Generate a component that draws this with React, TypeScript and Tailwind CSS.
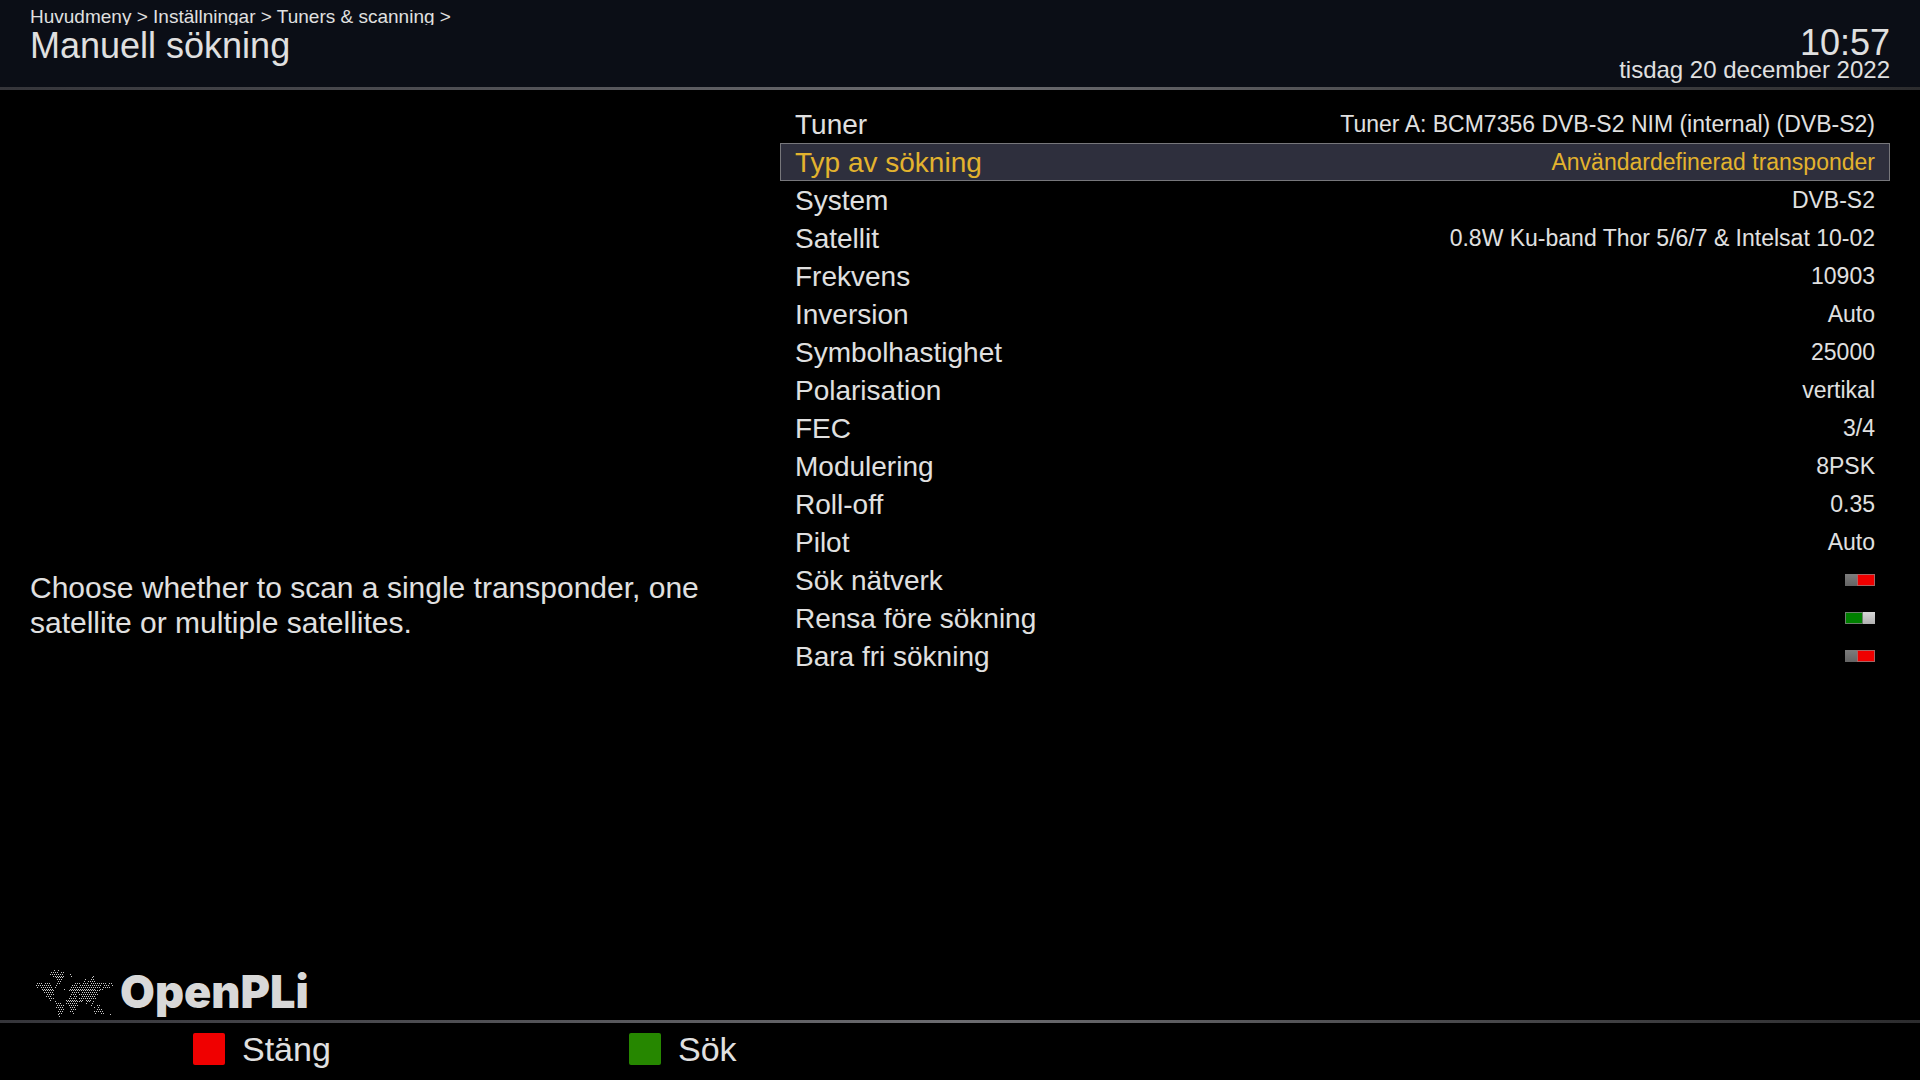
import clsx from 'clsx';

interface Setting {
  label: string;
  value: string | boolean;
}

const settings: Setting[] = [
  { label: 'Tuner', value: 'Tuner A: BCM7356 DVB-S2 NIM (internal) (DVB-S2)' },
  { label: 'Typ av sökning', value: 'Användardefinerad transponder' },
  { label: 'System', value: 'DVB-S2' },
  { label: 'Satellit', value: '0.8W Ku-band Thor 5/6/7 & Intelsat 10-02' },
  { label: 'Frekvens', value: '10903' },
  { label: 'Inversion', value: 'Auto' },
  { label: 'Symbolhastighet', value: '25000' },
  { label: 'Polarisation', value: 'vertikal' },
  { label: 'FEC', value: '3/4' },
  { label: 'Modulering', value: '8PSK' },
  { label: 'Roll-off', value: '0.35' },
  { label: 'Pilot', value: 'Auto' },
  { label: 'Sök nätverk', value: false },
  { label: 'Rensa före sökning', value: true },
  { label: 'Bara fri sökning', value: false },
];

const breadcrumbs = ['Huvudmeny', 'Inställningar', 'Tuners & scanning'];

// Dotted world map: each # is one dot, odd rows are shifted by half a step
const worldMap = [
  '.........#.#...........................',
  '.......####.##.........................',
  '.......#######...#.....................',
  '........######...#..........#..........',
  '..........####..............#..........',
  '..........###...........#..##..........',
  '...........##...........#.####.........',
  '###.###...##.......###.###.########.##.',
  '########..#.......###.###########.###.#',
  '#.######.#.......###############.####..',
  '...######.....#..#############..##.....',
  '...######.......################.......',
  '....#####.........####.########........',
  '.....####........###.##########........',
  '.....###.........#.##..#######.........',
  '......###.......####.#########.........',
  '.......#.......######.##.###...........',
  '.........#.....########..##.#..........',
  '..........###..######....#..#..........',
  '..........####..#####......#..##.......',
  '..........####...###.........#.#.......',
  '...........###...###..........###......',
  '...........###...##..........#####.....',
  '...........##.....#..........#..##.....',
  '...........#.........................#.',
  '...........#...........................',
];

function WorldMap() {
  return (
    <svg viewBox="0 0 78 48" className="h-12 w-[78px]" fill="#c8c8c8" aria-hidden="true">
      {worldMap.map((row, y) =>
        row.split('').map((dot, x) =>
          dot === '#' ? (
            <rect
              key={`${x}-${y}`}
              x={x * 2 + (y % 2)}
              y={Math.round(y * 1.85)}
              width="1"
              height="1"
              shapeRendering="crispEdges"
            />
          ) : null,
        ),
      )}
    </svg>
  );
}

function Toggle({ label, on }: { label: string; on: boolean }) {
  return (
    <button
      type="button"
      role="switch"
      aria-checked={on}
      aria-label={label}
      className={clsx('flex h-3 w-[30px]', on ? 'justify-start' : 'justify-end')}
    >
      {!on && <span className="h-full flex-1 bg-linear-to-b from-[#7c7c7c] to-[#646464]" />}
      <span className={clsx('h-full w-[18px] border', on ? 'border-[#6c806c] bg-[#008000]' : 'border-[#a86464] bg-[#f00000]')} />
      {on && <span className="h-full flex-1 bg-linear-to-b from-[#d8d8d8] to-[#b0b0b0]" />}
    </button>
  );
}

function SettingRow({ setting, selected }: { setting: Setting; selected: boolean }) {
  return (
    <li
      className={clsx(
        'flex h-[38px] items-center justify-between border px-[14px]',
        selected ? 'border-[#77777b] bg-[#2e2f3d] text-[#e3b32e]' : 'border-transparent',
      )}
    >
      <span className="pt-[2px] text-[28px] leading-[34px]">{setting.label}</span>
      {typeof setting.value === 'boolean' ? (
        <Toggle label={setting.label} on={setting.value} />
      ) : (
        <span className="text-[23px] leading-9">{setting.value}</span>
      )}
    </li>
  );
}

function Divider() {
  return <div className="h-[3px] bg-linear-to-r from-[#35353a] via-[#6c6c70] to-[#2c2c2e]" />;
}

export default function App() {
  return (
    <div className="flex min-h-screen flex-col bg-black font-['Liberation_Sans',Arial,sans-serif] text-[#e0e0e0]">
      <header className="flex h-[87px] justify-between bg-[#0b0e16] px-[30px]">
        <div>
          <nav className="mt-1 h-[21px] overflow-hidden text-[19px] leading-[25px]">
            {breadcrumbs.map((crumb) => (
              <span key={crumb}>
                <a href="#">{crumb}</a>
                {' > '}
              </span>
            ))}
          </nav>
          <h1 className="text-[36px] leading-[42px]">Manuell sökning</h1>
        </div>
        <div className="pt-[25px] text-right">
          <p className="text-[36px] leading-9">10:57</p>
          <p className="text-[24px] leading-[18px]">tisdag 20 december 2022</p>
        </div>
      </header>
      <Divider />

      <main className="flex flex-1 pr-[30px]">
        <section className="flex w-[780px] shrink-0 flex-col justify-between pl-[30px]">
          <p className="mt-[480px] max-w-[710px] text-[30px] leading-[35px]">
            Choose whether to scan a single transponder, one satellite or multiple satellites.
          </p>
          <div className="flex items-end gap-[6px] pb-[2px] pl-[6px]">
            <WorldMap />
            <span className="font-['Inter',sans-serif] text-[45px] leading-[52px] font-black text-[#d8d8d8]">OpenPLi</span>
          </div>
        </section>
        <ul className="flex-1 pt-[15px]">
          {settings.map((setting) => (
            <SettingRow key={setting.label} setting={setting} selected={setting.label === 'Typ av sökning'} />
          ))}
        </ul>
      </main>

      <Divider />
      <footer className="flex h-[57px] items-center pb-[6px] pl-[193px] text-[34px] leading-10">
        <button type="button" className="flex w-[436px] items-center gap-[17px]">
          <span className="size-8 rounded-xs bg-[#f00000]" />
          Stäng
        </button>
        <button type="button" className="flex items-center gap-[17px]">
          <span className="size-8 rounded-xs bg-[#268700]" />
          Sök
        </button>
      </footer>
    </div>
  );
}
